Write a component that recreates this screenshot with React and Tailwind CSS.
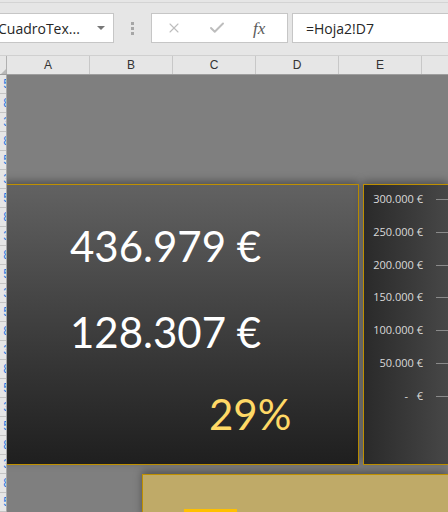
import { X, Check } from "lucide-react";

const cols = ["A", "B", "C", "D", "E"];
const axis = ["300.000 €", "250.000 €", "200.000 €", "150.000 €", "100.000 €", "50.000 €", "-   €"];
const rows = Array.from({ length: 23 }, (_, i) => i + 1);

export default function App() {
    return (
        <div className="w-[448px] h-[512px] overflow-hidden bg-[#e6e6e6] flex flex-col" style={{ fontFamily: '"Open Sans", "Noto Sans", sans-serif' }}>
            {/* FORMULA BAR */}
            <div className="h-[53px] shrink-0 border-t border-[#d4d4d4] mt-[2px] flex items-start pt-[10px] relative">
                <div className="w-[114px] h-[30px] bg-white border border-[#c6c6c6] border-l-0 flex items-center justify-between pr-[8px] ml-0">
                    <span className="text-[14px] text-[#262626] -ml-[2px] whitespace-nowrap">CuadroTex...</span>
                    <span className="w-0 h-0 border-l-[4px] border-r-[4px] border-t-[4px] border-l-transparent border-r-transparent border-t-[#777]" />
                </div>
                <div className="w-[37px] h-[30px] flex flex-col items-center justify-center gap-[2px]">
                    <span className="w-[3px] h-[3px] bg-[#a6a6a6]" />
                    <span className="w-[3px] h-[3px] bg-[#a6a6a6]" />
                    <span className="w-[3px] h-[3px] bg-[#a6a6a6]" />
                </div>
                <div className="w-[137px] h-[30px] bg-white border border-[#c6c6c6] flex items-center pl-[14px]">
                    <X className="w-[16px] h-[16px] text-[#bdbdbd]" strokeWidth={1.6} />
                    <Check className="w-[18px] h-[18px] text-[#bdbdbd] ml-[26px]" strokeWidth={2.6} />
                    <span className="ml-[27px] text-[17px] italic text-[#5a5a5a] leading-none" style={{ fontFamily: '"Liberation Serif", serif' }}>fx</span>
                </div>
                <div className="ml-[4px] flex-1 h-[30px] bg-white border border-[#c6c6c6] border-r-0 flex items-center pl-[13px]">
                    <span className="text-[14px] text-[#262626]">=Hoja2!D7</span>
                </div>
            </div>

            {/* COLUMN HEADERS */}
            <div className="h-[20px] shrink-0 flex border-t border-[#d0d0d0] border-b border-b-[#9e9e9e]">
                <div className="w-[7px] shrink-0 border-r border-[#b0b0b0] flex items-end justify-end">
                    <span className="w-0 h-0 border-l-[5px] border-t-[5px] border-l-transparent border-t-transparent border-b-0 border-r-0" style={{ borderBottom: "5px solid #b8b8b8" }} />
                </div>
                {cols.map((c) => (
                    <div key={c} className="w-[83px] shrink-0 border-r border-[#c8c8c8] flex items-center justify-center text-[12px] text-[#333]" style={{ fontFamily: '"Liberation Sans", sans-serif' }}>
                        {c}
                    </div>
                ))}
                <div className="flex-1" />
            </div>

            {/* SHEET */}
            <div className="flex flex-1 min-h-0">
                <div className="w-[7px] shrink-0 border-r border-[#a8a8a8] bg-[#e6e6e6] overflow-hidden flex flex-col">
                    {rows.map((r) => (
                        <div key={r} className="h-[19px] shrink-0 border-b border-[#c4c4c4] flex justify-end items-center overflow-hidden">
                            <span className="text-[12px] text-[#1f7ae0] whitespace-nowrap -mr-[4px]" style={{ fontFamily: '"Liberation Sans", sans-serif' }}>{r % 3 === 0 ? "3" : r % 2 ? "5" : "8"}</span>
                        </div>
                    ))}
                </div>

                <div className="flex-1 bg-[#7f7f7f] overflow-hidden flex flex-col pt-[109px]">
                    {/* CARDS ROW */}
                    <div className="flex h-[281px] shrink-0 gap-[4px]">
                        <div className="w-[356px] shrink-0 -ml-[4px] border border-[#bf9000] bg-gradient-to-b from-[#626262] to-[#1f1f1f] shadow-[0_-3px_8px_rgba(0,0,0,0.35)] flex flex-col pl-[66px]" style={{ fontFamily: '"Lato", "Open Sans", sans-serif' }}>
                            <div className="mt-[40px] text-[42px] leading-none text-white">436.979 €</div>
                            <div className="mt-[44px] text-[42px] leading-none text-white">128.307 €</div>
                            <div className="mt-[40px] ml-[139px] text-[42px] leading-none text-[#ffd966]">29%</div>
                        </div>
                        <div className="flex-1 border border-[#bf9000] border-r-0 bg-gradient-to-r from-[#2a2a2a] to-[#474747] shadow-[0_-3px_8px_rgba(0,0,0,0.35)] flex flex-col pt-[7px]">
                            {axis.map((a) => (
                                <div key={a} className="h-[32.8px] shrink-0 flex items-start">
                                    <span className="w-[59px] text-right text-[11px] leading-[14px] text-[#d9d9d9] whitespace-pre" style={{ fontFamily: '"Open Sans", sans-serif' }}>{a}</span>
                                    <span className="ml-[13px] mt-[7px] flex-1 h-px bg-[#8a8a8a]" />
                                </div>
                            ))}
                        </div>
                    </div>

                    {/* BOTTOM CARD */}
                    <div className="mt-[9px] ml-[135px] flex-1 border border-[#bf9000] border-r-0 border-b-0 bg-[#bfaa68] shadow-[0_-3px_8px_rgba(0,0,0,0.35)] pl-[41px] pt-[34px]">
                        <div className="w-[53px] h-[10px] bg-[#ffc000]" />
                    </div>
                </div>
            </div>
        </div>
    );
}
